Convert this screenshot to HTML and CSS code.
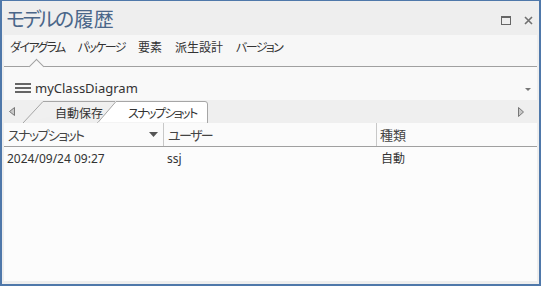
FILE: index.html
```html
<!DOCTYPE html>
<html lang="ja">
<head>
  <meta charset="UTF-8">
  <title>モデルの履歴</title>
  <link rel="stylesheet" href="styles.css">
</head>
<body>
  <div class="window">
    <div class="titlebar">
      <h1 class="title"><span class="kana">モデルの</span>履歴</h1>
      <div class="win-buttons">
        <svg width="10" height="9" viewBox="0 0 10 9"><rect x="0.5" y="0.5" width="9" height="8" fill="none" stroke="#666" stroke-width="1"/><line x1="0" y1="1" x2="10" y2="1" stroke="#666" stroke-width="2"/></svg>
        <svg width="9" height="9" viewBox="0 0 9 9"><path d="M1 1 L8 8 M8 1 L1 8" stroke="#707070" stroke-width="1.6"/></svg>
      </div>
    </div>

    <div class="panel">
      <nav class="nav">
        <span class="nav-item kana active">ダイアグラム</span>
        <span class="nav-item kana">パッケージ</span>
        <span class="nav-item">要素</span>
        <span class="nav-item">派生設計</span>
        <span class="nav-item kana">バージョン</span>
      </nav>

      <div class="diagram-bar">
        <svg class="menu-icon" width="16" height="10" viewBox="0 0 16 10"><rect y="0" width="16" height="2" fill="#666"/><rect y="4" width="16" height="2" fill="#666"/><rect y="8" width="16" height="2" fill="#666"/></svg>
        <span class="diagram-name">myClassDiagram</span>
        <svg class="drop" width="6" height="3" viewBox="0 0 6 3"><path d="M0 0 L6 0 L3 3 Z" fill="#777"/></svg>
      </div>

      <div class="tabstrip">
        <svg class="scroll" width="6" height="9" viewBox="0 0 6 9"><path d="M5.5 0.5 L0.5 4.5 L5.5 8.5 Z" fill="#c8c8c8" stroke="#777"/></svg>
        <div class="tabs">
          <div class="tab">
            <svg class="tab-shape" width="92" height="23" viewBox="0 0 92 23"><path d="M0 23 L20 1.5 L92 1.5" fill="#f0f0f0" stroke="#a6a6a6"/></svg>
            <span class="tab-label">自動保存</span>
          </div>
          <div class="tab active">
            <svg class="tab-shape" width="112" height="23" viewBox="0 0 112 23"><path d="M0.5 23 L19 1.5 L108 1.5 Q110.5 1.5 110.5 4 L110.5 23 Z" fill="#ffffff" stroke="#a6a6a6"/><line x1="1" y1="23" x2="110" y2="23" stroke="#fff" stroke-width="1.5"/></svg>
            <span class="tab-label kana">スナップショット</span>
          </div>
        </div>
        <svg class="scroll right" width="6" height="10" viewBox="0 0 6 10"><path d="M0.5 0.5 L5.5 5 L0.5 9.5 Z" fill="#c8c8c8" stroke="#777"/></svg>
      </div>

      <div class="grid-head">
        <div class="head-cell sortable">
          <span class="kana">スナップショット</span>
          <svg width="9" height="5" viewBox="0 0 9 5"><path d="M0 0 L9 0 L4.5 5 Z" fill="#555"/></svg>
        </div>
        <div class="head-cell kana">ユーザー</div>
        <div class="head-cell last">種類</div>
      </div>

      <div class="grid-body">
        <div class="grid-row">
          <div class="cell">2024/09/24 09:27</div>
          <div class="cell">ssj</div>
          <div class="cell">自動</div>
        </div>
      </div>
    </div>
  </div>
</body>
</html>
```

FILE: styles.css
```css
* {
  box-sizing: border-box;
}
body {
  margin: 0;
  font-family: "Noto Sans", "Noto Sans CJK JP", sans-serif;
  font-feature-settings: "palt";
  color: #333;
}
.kana {
  letter-spacing: -1.6px;
  white-space: nowrap;
}
.window {
  width: 541px;
  height: 286px;
  display: flex;
  flex-direction: column;
  background: #eeeeee;
  border: 2px solid #4f78aa;
  border-top-width: 1px;
}
.titlebar {
  height: 34px;
  flex: none;
  display: flex;
  align-items: center;
  justify-content: space-between;
  padding: 0 6px 0 4px;
}
.title {
  margin: 0;
  font-size: 20px;
  font-weight: normal;
  color: #4a6689;
}
.title .kana {
  letter-spacing: -2.5px;
  margin-right: 2px;
}
.win-buttons {
  display: flex;
  align-items: center;
  gap: 13px;
  padding-top: 4px;
}
.panel {
  flex: 1;
  margin: 0 2px 3px 2px;
  display: flex;
  flex-direction: column;
  background: #fcfcfc;
}
.nav {
  height: 32px;
  flex: none;
  display: flex;
  align-items: center;
  gap: 13px;
  padding: 0 0 8px 6px;
  background: #f7f7f7;
  border-bottom: 1px solid #a0a0a0;
  font-size: 12px;
}
.nav-item {
  position: relative;
  color: #333;
}
.nav-item.active::after {
  content: "";
  position: absolute;
  left: 21px;
  top: 23px;
  width: 10px;
  height: 10px;
  background: #f9f9f9;
  border-top: 1px solid #a0a0a0;
  border-left: 1px solid #a0a0a0;
  transform: rotate(45deg);
}
.diagram-bar {
  height: 33px;
  flex: none;
  display: flex;
  align-items: center;
  padding: 9px 6px 0 11px;
  background: #f9f9f9;
}
.menu-icon {
  margin-right: 4px;
}
.diagram-name {
  flex: 1;
  font-size: 13px;
  color: #333;
}
.drop {
  margin-top: 3px;
}
.tabstrip {
  height: 23px;
  flex: none;
  display: flex;
  align-items: flex-end;
  background: #efefef;
  padding: 0 13px 0 5px;
}
.scroll {
  align-self: center;
}
.scroll.right {
  margin-left: auto;
}
.tabs {
  display: flex;
  margin-left: 8px;
  height: 23px;
}
.tab {
  position: relative;
  width: 92px;
  height: 23px;
  padding: 5px 0 0 32px;
  font-size: 12px;
  white-space: nowrap;
}
.tab.active {
  width: 112px;
  margin-left: -18px;
  padding-left: 31px;
}
.tab-shape {
  position: absolute;
  left: 0;
  top: 0;
}
.tab-label {
  position: relative;
  color: #333;
  line-height: 16px;
}
.grid-head,
.grid-row {
  display: grid;
  grid-template-columns: 160px 213px 1fr;
}
.grid-head {
  height: 24px;
  flex: none;
  background: #fbfbfb;
  border-bottom: 1px solid #a0a0a0;
  font-size: 13px;
  color: #444;
}
.head-cell {
  display: flex;
  align-items: center;
  padding-left: 4px;
  border-right: 1px solid #c8c8c8;
}
.head-cell.last {
  border-right: none;
  padding-left: 3px;
}
.sortable {
  justify-content: space-between;
  padding-right: 5px;
}
.grid-body {
  flex: 1;
  background: #fcfcfc;
}
.grid-row {
  height: 21px;
  font-size: 12px;
  color: #333;
}
.cell {
  display: flex;
  align-items: center;
  padding-left: 3px;
  padding-top: 1px;
}
.cell:nth-child(3) {
  padding-left: 4px;
}
```
